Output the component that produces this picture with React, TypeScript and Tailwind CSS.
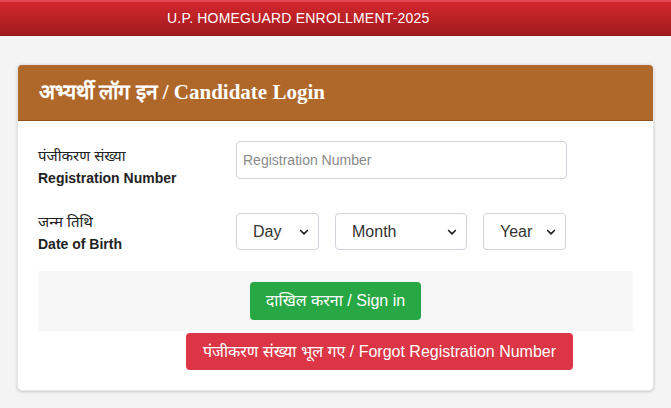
import React from 'react';

const ChevronDown = () => (
  <svg width="12" height="12" viewBox="0 0 16 16" className="shrink-0">
    <path d="M3.5 6l4.5 4.5L12.5 6" fill="none" stroke="#222" strokeWidth="2.2" strokeLinecap="round" strokeLinejoin="round" />
  </svg>
);

const SelectBox = ({ label, width }: { label: string; width: string }) => (
  <div className={`${width} h-[37px] flex items-center justify-between border border-[#ced4da] rounded-[4px] bg-white pl-4 pr-2 text-[16px] text-[#333]`}>
    <span>{label}</span>
    <ChevronDown />
  </div>
);

export default function App() {
  return (
    <div className="w-[671px] h-[408px] bg-[#f4f4f4] overflow-hidden" style={{ fontFamily: '"Liberation Sans", Arial, "Noto Sans", sans-serif' }}>
      <div className="h-[36px] bg-gradient-to-b from-[#d3272d] to-[#a21b1e] border-t-2 border-[#e04a4f] border-b border-b-[#8e1518] flex items-center pl-[167px]">
        <span className="text-white text-[14px] tracking-[0.2px]">U.P. HOMEGUARD ENROLLMENT-2025</span>
      </div>
      <div className="px-[17px] pt-[28px]">
        <div className="bg-white rounded-[5px] shadow-[0_1px_3px_rgba(0,0,0,0.18)] border border-[#e6e6e6] overflow-hidden">
          <div className="h-[56px] bg-[#b0672a] flex items-center px-[21px] border-b border-[#8d5220]">
            <span className="text-white text-[21px] font-bold" style={{ fontFamily: '"Liberation Serif", "Times New Roman", serif' }}>
              अभ्यर्थी लॉग इन / Candidate Login
            </span>
          </div>
          <div className="px-[20px] pt-[20px] pb-[20px]">
            <div className="flex items-start">
              <div className="w-[198px] pt-[3px] text-[#222]">
                <div className="text-[15px] leading-[23px]">पंजीकरण संख्या</div>
                <div className="text-[14px] font-bold leading-[22px]">Registration Number</div>
              </div>
              <div className="w-[331px] h-[38px] border border-[#ced4da] rounded-[4px] flex items-center px-[6px] text-[14px] text-[#8a8a8a]">
                Registration Number
              </div>
            </div>
            <div className="flex items-start mt-[24px]">
              <div className="w-[198px] text-[#222] -mt-[3px]">
                <div className="text-[15px] leading-[23px]">जन्म तिथि</div>
                <div className="text-[14px] font-bold leading-[22px]">Date of Birth</div>
              </div>
              <div className="flex gap-[16px]">
                <SelectBox label="Day" width="w-[83px]" />
                <SelectBox label="Month" width="w-[132px]" />
                <SelectBox label="Year" width="w-[83px]" />
              </div>
            </div>
            <div className="mt-[16px] bg-[#f7f7f7] h-[60px] flex items-center pl-[212px]">
              <div className="h-[38px] w-[171px] bg-[#28a745] rounded-[4px] text-white text-[16px] flex items-center justify-center">
                दाखिल करना / Sign in
              </div>
            </div>
            <div className="mt-[2px] pl-[148px]">
              <div className="h-[37px] w-[387px] bg-[#dc3545] rounded-[4px] text-white text-[16px] flex items-center justify-center">
                पंजीकरण संख्या भूल गए / Forgot Registration Number
              </div>
            </div>
          </div>
        </div>
      </div>
    </div>
  );
}
